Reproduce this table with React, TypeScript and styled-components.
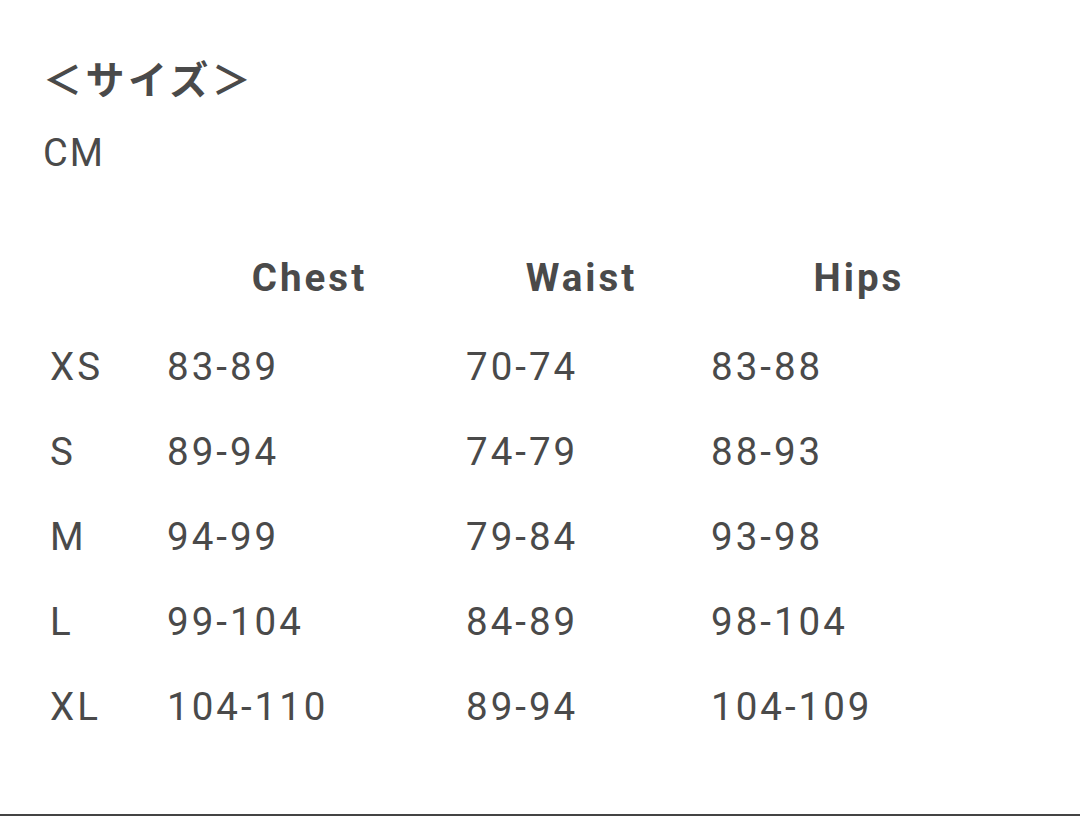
import styled, { createGlobalStyle } from "styled-components";

const GlobalStyle = createGlobalStyle`
    html, body {
        margin: 0;
        padding: 0;
        background: #ffffff;
    }
    body {
        font-family: Roboto, "Noto Sans CJK JP", sans-serif;
        color: #4a4a4a;
    }
`;

const Page = styled.div`
    width: 1080px;
    height: 816px;
    box-sizing: border-box;
    padding: 56px 0 0 43px;
    border-bottom: 2px solid #444444;
    overflow: hidden;
`;

const Title = styled.h1`
    margin: 0;
    font-family: Roboto, "Noto Sans CJK JP", sans-serif;
    font-size: 39px;
    font-weight: 700;
    line-height: 50px;
    letter-spacing: 3.5px;
`;

const Unit = styled.div`
    margin-top: 25px;
    font-size: 38px;
    line-height: 44px;
    letter-spacing: 2px;
`;

const Table = styled.div`
    display: grid;
    grid-template-columns: 117px 299px 245px 310px;
    grid-template-rows: 89px;
    grid-auto-rows: 85px;
    margin: 60px 0 0 7px;
`;

const Cell = styled.div<{ head?: boolean }>`
    padding-right: 14px;
    font-size: 38.5px;
    line-height: 85px;
    font-weight: ${(props) => (props.head ? 700 : 400)};
    text-align: ${(props) => (props.head ? "center" : "left")};
    letter-spacing: ${(props) => (props.head ? "3px" : "3px")};
    white-space: nowrap;
`;

const headers = ["Chest", "Waist", "Hips"];

const rows = [
    ["XS", "83-89", "70-74", "83-88"],
    ["S", "89-94", "74-79", "88-93"],
    ["M", "94-99", "79-84", "93-98"],
    ["L", "99-104", "84-89", "98-104"],
    ["XL", "104-110", "89-94", "104-109"],
];

function App() {
    return (
        <>
            <GlobalStyle />
            <Page>
                <Title>＜サイズ＞</Title>
                <Unit>CM</Unit>
                <Table>
                    <Cell />
                    {headers.map((h) => (
                        <Cell head key={h}>
                            {h}
                        </Cell>
                    ))}
                    {rows.map((row) =>
                        row.map((value, i) => <Cell key={row[0] + i}>{value}</Cell>)
                    )}
                </Table>
            </Page>
        </>
    );
}

export default App;
